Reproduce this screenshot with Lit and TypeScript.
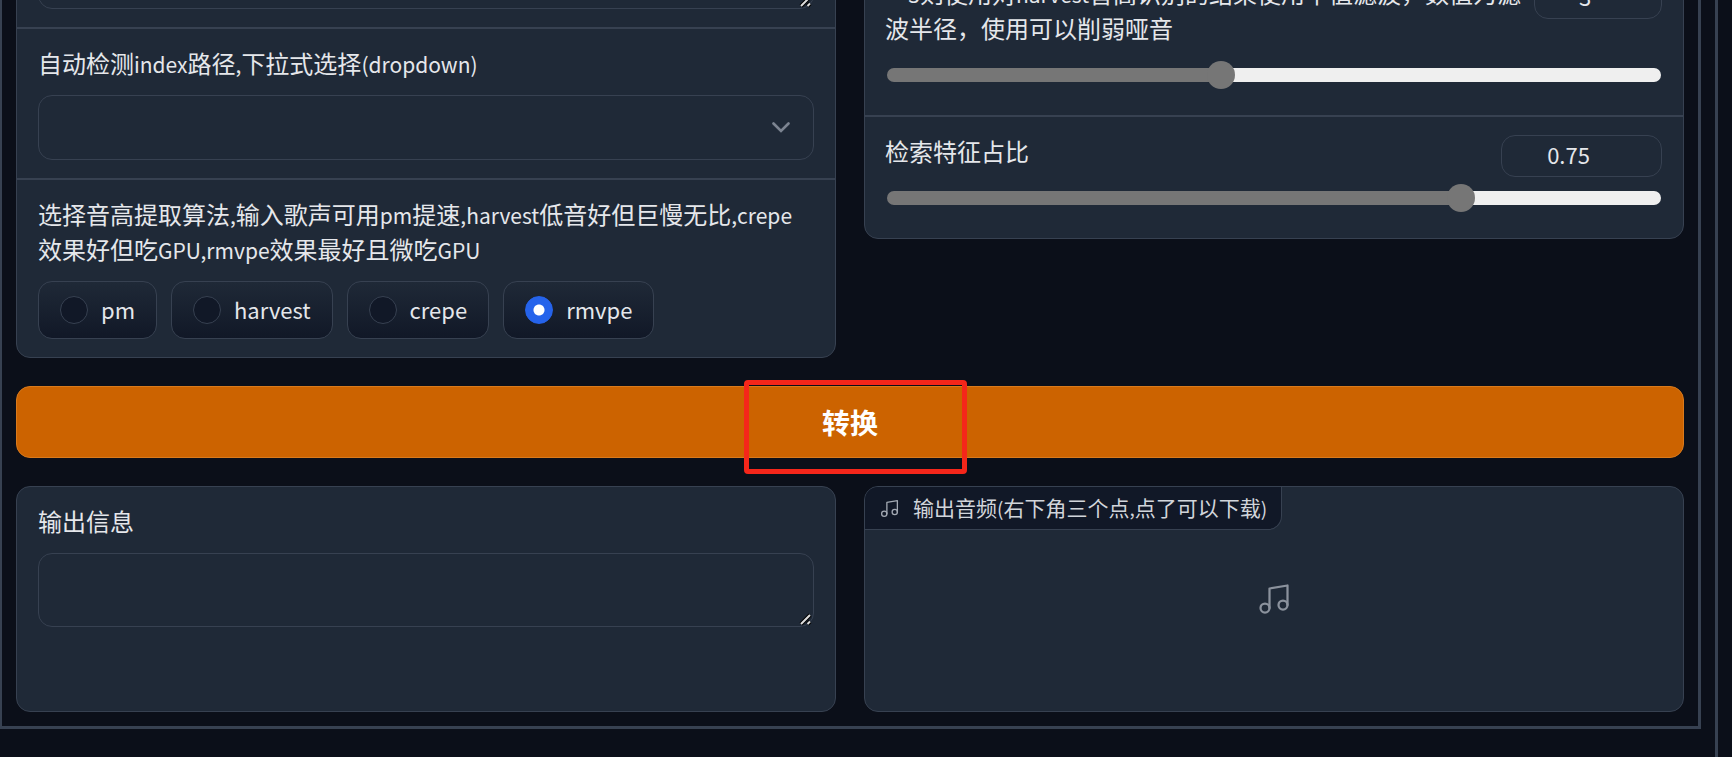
import { LitElement, html, css, svg } from "lit";
import { customElement, property, state } from "lit/decorators.js";

const musicIcon = html`<svg viewBox="0 0 24 24" fill="none" stroke="currentColor" stroke-width="1.5"
  stroke-linecap="round" stroke-linejoin="round" aria-hidden="true">
  ${svg`<path d="M9 18V5l12-2v13"></path><circle cx="6" cy="18" r="3"></circle><circle cx="18" cy="16" r="3"></circle>`}
</svg>`;

/* Latin runs are set a little smaller than the Chinese around them. */
const mixed = (text: string) =>
  text.split(/([\x20-\x7e]+)/).map((part, i) => (i % 2 ? html`<span class="latin">${part}</span>` : part));

const shared = css`
  * {
    box-sizing: border-box;
  }
  label,
  .label {
    display: block;
    font-size: 24px;
    line-height: 35px;
    color: #e5e7eb;
  }
  .latin {
    font-size: 21px;
    line-height: 1;
  }
  input,
  select,
  textarea,
  button {
    margin: 0;
    font-family: inherit;
    color: inherit;
  }
`;

@customElement("slider-field")
export class SliderField extends LitElement {
  static styles = [
    shared,
    css`
      :host {
        display: block;
        padding: 16px 21px 26px 20px;
      }
      .head {
        display: flex;
        align-items: flex-start;
        justify-content: space-between;
        gap: 8px;
        margin-bottom: 7px;
      }
      label {
        padding-bottom: 9px;
      }
      .number {
        flex: none;
        width: 161px;
        height: 42px;
        margin-top: 2px;
        padding: 0 33px 4px 7px;
        border: 1px solid #374151;
        border-radius: 14px;
        background: #1f2937;
        color: #e5e7eb;
        font-size: 22px;
        text-align: center;
        appearance: textfield;
      }
      .number.compact {
        width: 128px;
      }
      .number::-webkit-inner-spin-button {
        display: none;
      }
      .range {
        display: block;
        width: calc(100% - 3px);
        height: 28px;
        margin: 0 1px 0 2px;
        appearance: none;
        background: none;
      }
      .range::-webkit-slider-runnable-track {
        height: 14px;
        border-radius: 7px;
        background: linear-gradient(to right, #767676 var(--fill), #efefef var(--fill));
      }
      .range::-webkit-slider-thumb {
        appearance: none;
        width: 28px;
        height: 28px;
        margin-top: -7px;
        border-radius: 50%;
        background: #767676;
      }
    `,
  ];

  @property() label = "";
  @property({ type: Number }) max = 1;
  @property({ type: Number }) step = 1;
  @property({ type: Number }) value = 0;
  @property({ type: Boolean }) compact = false;

  private onInput(e: Event) {
    this.value = Number((e.target as HTMLInputElement).value);
  }

  render() {
    const fill = `${(this.value / this.max) * 100}%`;
    return html`
      <div class="head">
        <label for="number">${mixed(this.label)}</label>
        <input id="number" class="number ${this.compact ? "compact" : ""}" type="number" min="0"
          .max=${String(this.max)} .step=${String(this.step)} .value=${String(this.value)} @input=${this.onInput} />
      </div>
      <input class="range" type="range" aria-label=${this.label} min="0" max=${this.max} step=${this.step}
        .value=${String(this.value)} style="--fill:${fill}" @input=${this.onInput} />
    `;
  }
}

@customElement("app-root")
export class AppRoot extends LitElement {
  static styles = [
    shared,
    css`
      :host {
        display: block;
        min-height: 100vh;
        overflow: hidden;
        background: #0b0f19;
        color: #e5e7eb;
        font-family: "Noto Sans CJK SC", "Noto Sans", sans-serif;
      }
      .page {
        min-height: 100vh;
        margin-right: 14px;
        padding: 0 14px 28px 0;
        border-right: 3px solid #374151;
      }
      .tab {
        display: flex;
        flex-direction: column;
        gap: 28px;
        padding: 0 14px 14px;
        border: solid #374151;
        border-width: 0 3px 3px 2px;
      }
      .columns {
        display: grid;
        grid-template-columns: 1fr 1fr;
        gap: 28px;
        align-items: start;
      }
      .results {
        align-items: stretch;
      }
      .card {
        min-width: 0;
        border: 1px solid #374151;
        border-radius: 14px;
        background: #1f2937;
      }
      /* The form is scrolled: each column starts above the top edge. */
      .scrolled-left {
        margin-top: -82px;
      }
      .scrolled-right {
        margin-top: -42px;
      }
      .row {
        padding: 16px 21px 18px;
      }
      .row + .row,
      slider-field + slider-field {
        border-top: 2px solid #374151;
      }
      .title {
        margin-bottom: 15px;
      }
      textarea {
        display: block;
        width: 100%;
        height: 74px;
        padding: 14px;
        border: 1px solid #374151;
        border-radius: 14px;
        background: #1f2937;
        font-size: 24px;
        resize: vertical;
      }
      textarea::-webkit-resizer {
        background: url("data:image/svg+xml,%3Csvg xmlns='http://www.w3.org/2000/svg' width='15' height='15'%3E%3Cpath d='M3 13l9-9M9.500 13l2.500-2.500' stroke='%23000' stroke-width='4'/%3E%3Cpath d='M3 13l9-9M9.500 13l2.500-2.500' stroke='%23ddd' stroke-width='2'/%3E%3C/svg%3E")
          no-repeat;
      }
      .select {
        position: relative;
      }
      select {
        display: block;
        width: 100%;
        height: 65px;
        padding: 0 50px 0 21px;
        border: 1px solid #374151;
        border-radius: 14px;
        background: #1f2937;
        font-size: 24px;
        appearance: none;
      }
      .chevron {
        position: absolute;
        top: 27px;
        right: 24px;
        width: 18px;
        height: 11px;
        color: #7c8491;
        pointer-events: none;
      }
      fieldset {
        min-width: 0;
        margin: 0;
        border: 0;
      }
      .options {
        display: flex;
        flex-wrap: wrap;
        gap: 14px;
      }
      .option {
        display: flex;
        align-items: center;
        gap: 13px;
        height: 58px;
        padding: 0 21px;
        border: 1px solid #374151;
        border-radius: 14px;
        background: linear-gradient(to bottom, #1f2937, #111827);
        font-size: 22px;
      }
      .option span {
        padding-bottom: 2px;
      }
      .option input {
        flex: none;
        width: 28px;
        height: 28px;
        border: 1px solid #374151;
        border-radius: 50%;
        background: #111827;
        appearance: none;
      }
      .option input:checked {
        border-color: #2563eb;
        background: radial-gradient(circle, #fff 5px, #2563eb 6px);
      }
      .action {
        position: relative;
      }
      .convert {
        display: block;
        width: 100%;
        height: 72px;
        border: 1px solid #d97a1c;
        border-radius: 14px;
        background: #cc6300;
        color: #fff;
        font-size: 28px;
        font-weight: 700;
        line-height: 42px;
      }
      .highlight {
        position: absolute;
        top: -6px;
        left: calc(50% - 106px);
        width: 223px;
        height: 94px;
        border: 5px solid #f5261a;
        border-radius: 4px;
        pointer-events: none;
      }
      .results .card {
        min-height: 226px;
      }
      .audio {
        position: relative;
        display: grid;
        place-items: center;
        overflow: hidden;
        color: #8b929d;
      }
      .badge {
        position: absolute;
        top: 0;
        left: 0;
        display: flex;
        align-items: center;
        gap: 13px;
        height: 43px;
        padding: 0 14px;
        border: solid #374151;
        border-width: 0 1px 1px 0;
        border-bottom-right-radius: 14px;
        background: #111827;
        color: #d1d5db;
        font-size: 21px;
        line-height: 28px;
        white-space: nowrap;
      }
      .badge .latin {
        font-size: 19px;
      }
      .badge .text {
        padding-bottom: 2px;
      }
      .badge svg {
        width: 21px;
        height: 21px;
        color: #a3a9b3;
      }
      .empty svg {
        display: block;
        width: 36px;
        height: 36px;
      }
    `,
  ];

  @state() private method = "rmvpe";

  render() {
    return html`
      <main class="page">
        <section class="tab">
          <div class="columns">
            <div class="card scrolled-left">
              <div class="row"><textarea aria-label="index"></textarea></div>
              <div class="row">
                <label class="title" for="index">${mixed("自动检测index路径,下拉式选择(dropdown)")}</label>
                <div class="select">
                  <select id="index"><option value=""></option></select>
                  <svg class="chevron" viewBox="0 0 18 11" fill="none" stroke="currentColor" stroke-width="2.600"
                    stroke-linecap="round" aria-hidden="true"><path d="M1.500 1.500L9 9l7.500-7.500"></path></svg>
                </div>
              </div>
              <fieldset class="row" aria-labelledby="method">
                <div class="label title" id="method">${mixed(
                  "选择音高提取算法,输入歌声可用pm提速,harvest低音好但巨慢无比,crepe效果好但吃GPU,rmvpe效果最好且微吃GPU"
                )}</div>
                <div class="options">
                  ${["pm", "harvest", "crepe", "rmvpe"].map(
                    (name) => html`<label class="option">
                      <input type="radio" name="method" value=${name} .checked=${this.method === name}
                        @change=${() => (this.method = name)} />
                      <span>${name}</span>
                    </label>`
                  )}
                </div>
              </fieldset>
            </div>
            <div class="card scrolled-right">
              <slider-field compact max="7" value="3"
                label=">=3则使用对harvest音高识别的结果使用中值滤波，数值为滤波半径，使用可以削弱哑音"></slider-field>
              <slider-field max="1" step="0.01" value="0.75" label="检索特征占比"></slider-field>
            </div>
          </div>
          <div class="action">
            <button class="convert" type="button">转换</button>
            <div class="highlight"></div>
          </div>
          <div class="columns results">
            <div class="card row">
              <label class="title" for="info">输出信息</label>
              <textarea id="info"></textarea>
            </div>
            <div class="card audio">
              <div class="badge">
                ${musicIcon}<span class="text">${mixed("输出音频(右下角三个点,点了可以下载)")}</span>
              </div>
              <div class="empty">${musicIcon}</div>
            </div>
          </div>
        </section>
      </main>
    `;
  }
}
